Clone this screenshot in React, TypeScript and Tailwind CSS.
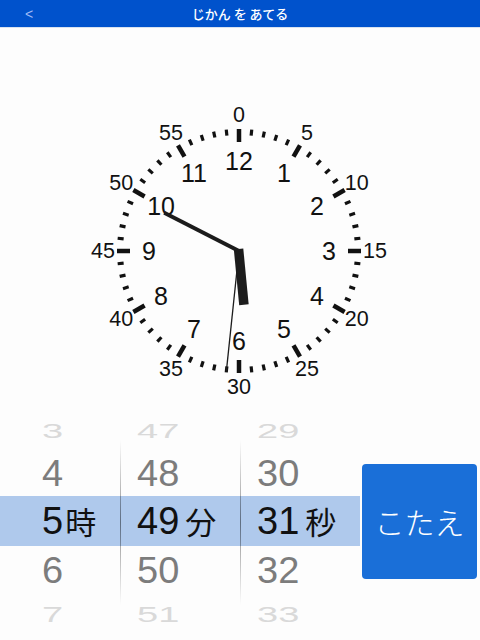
import React from "react";

const CX = 150;
const CY = 150;

function polar(r: number, deg: number) {
  const a = (deg * Math.PI) / 180;
  return { x: CX + r * Math.sin(a), y: CY - r * Math.cos(a) };
}

function ClockFace({ h, m, s }: { h: number; m: number; s: number }) {
  const ticks = Array.from({ length: 60 }, (_, i) => i);
  const minuteLabels = Array.from({ length: 12 }, (_, i) => i * 5);
  const hourLabels = Array.from({ length: 12 }, (_, i) => i + 1);

  const secDeg = s * 6;
  const minDeg = (m + s / 60) * 6;
  const hourDeg = ((h % 12) + m / 60) * 30;

  const minEnd = polar(84, minDeg);
  const secEnd = polar(121, secDeg);

  return (
    <svg width="300" height="300" viewBox="0 0 300 300" className="block overflow-visible">
      {ticks.map((i) => {
        const major = i % 5 === 0;
        const a = polar(major ? 109 : 116, i * 6);
        const b = polar(122, i * 6);
        return (
          <line
            key={i}
            x1={a.x}
            y1={a.y}
            x2={b.x}
            y2={b.y}
            stroke="#111"
            strokeWidth={major ? 4.5 : 3.2}
          />
        );
      })}
      {minuteLabels.map((n) => {
        const p = polar(136, n * 6);
        return (
          <text
            key={n}
            x={p.x}
            y={p.y}
            textAnchor="middle"
            dominantBaseline="central"
            fontFamily="'Liberation Sans', Arial, sans-serif"
            fontSize="21.5"
            fill="#111"
          >
            {n}
          </text>
        );
      })}
      {hourLabels.map((n) => {
        const p = polar(90, n * 30);
        return (
          <text
            key={n}
            x={p.x}
            y={p.y}
            textAnchor="middle"
            dominantBaseline="central"
            fontFamily="'Liberation Sans', Arial, sans-serif"
            fontSize="25"
            fill="#111"
          >
            {n}
          </text>
        );
      })}
      {/* hour hand */}
      <rect
        x={CX - 4.5}
        y={CY - 54}
        width="9.5"
        height="56"
        fill="#1c1c1c"
        transform={`rotate(${hourDeg} ${CX} ${CY})`}
      />
      {/* minute hand */}
      <line x1={CX} y1={CY} x2={minEnd.x} y2={minEnd.y} stroke="#1c1c1c" strokeWidth="4" />
      {/* second hand */}
      <line x1={CX} y1={CY} x2={secEnd.x} y2={secEnd.y} stroke="#1c1c1c" strokeWidth="1.3" />
    </svg>
  );
}

const DIGITS = "'Liberation Sans', Arial, sans-serif";
const KANJI = "'Noto Sans CJK JP', sans-serif";

function Wheel({
  values,
  unit,
  gap,
  pad,
}: {
  values: string[];
  unit: string;
  gap: string;
  pad: string;
}) {
  const [a, b, c, d, e] = values;
  return (
    <div className={`flex w-[120px] flex-col ${pad}`} style={{ fontFamily: DIGITS }}>
      <div className="flex h-[29px] items-center overflow-hidden">
        <span className="-translate-y-[2px] scale-y-[0.55] text-[38px] leading-none text-[#d9d9d9]">{a}</span>
      </div>
      <div className="flex h-[49px] items-center">
        <span className="translate-y-[2px] scale-y-[0.95] text-[38px] leading-none text-[#7c7c7c]">{b}</span>
      </div>
      <div className="flex h-[50px] items-center">
        <span className="flex items-baseline text-[38px] leading-none text-[#111]">
          {c}
          <span className={`${gap} text-[31px]`} style={{ fontFamily: KANJI }}>
            {unit}
          </span>
        </span>
      </div>
      <div className="flex h-[49px] items-center">
        <span className="scale-y-[0.95] text-[38px] leading-none text-[#7c7c7c]">{d}</span>
      </div>
      <div className="flex h-[45px] items-center overflow-hidden">
        <span className="-translate-y-[4px] scale-y-[0.6] text-[38px] leading-none text-[#d9d9d9]">{e}</span>
      </div>
    </div>
  );
}

function Divider() {
  return <div className="mt-[22px] h-[165px] w-px bg-gradient-to-b from-transparent via-black/45 to-transparent" />;
}

export default function App() {
  return (
    <div className="flex h-[640px] w-[480px] flex-col overflow-hidden bg-[#fdfdfd]">
      <header className="flex h-[27px] items-center bg-[#0052cc] pl-[25px] pr-[23px] shadow-[0_1px_0_#d8e2f0]">
        <span className="w-[18px] text-[14px] leading-none text-[#9fbaf5]" style={{ fontFamily: DIGITS }}>
          &lt;
        </span>
        <h1
          className="flex-1 pr-[20px] text-center text-[13px] font-medium leading-none text-white"
          style={{ fontFamily: KANJI }}
        >
          じかん を あてる
        </h1>
      </header>

      <main className="flex justify-center pt-[74px]">
        <div className="-ml-[2px]">
          <ClockFace h={5} m={49} s={31} />
        </div>
      </main>

      <section className="mt-[17px] flex h-[222px]">
        <div className="flex w-[360px] bg-[linear-gradient(to_bottom,transparent_78px,#afc9ec_78px,#afc9ec_128px,transparent_128px)]">
          <Wheel values={["3", "4", "5", "6", "7"]} unit="時" gap="ml-[2px]" pad="pl-[42px]" />
          <Divider />
          <div className="-ml-px">
            <Wheel values={["47", "48", "49", "50", "51"]} unit="分" gap="ml-[6px]" pad="pl-[17px]" />
          </div>
          <Divider />
          <div className="-ml-px">
            <Wheel values={["29", "30", "31", "32", "33"]} unit="秒" gap="ml-[6px]" pad="pl-[17px]" />
          </div>
        </div>
        <div className="ml-[2px] mt-[46px]">
          <button
            className="flex h-[115px] w-[115px] items-center justify-center rounded-[4px] bg-[#1a6fd8] text-[30px] font-light text-white"
            style={{ fontFamily: KANJI }}
          >
            こたえ
          </button>
        </div>
      </section>
    </div>
  );
}
